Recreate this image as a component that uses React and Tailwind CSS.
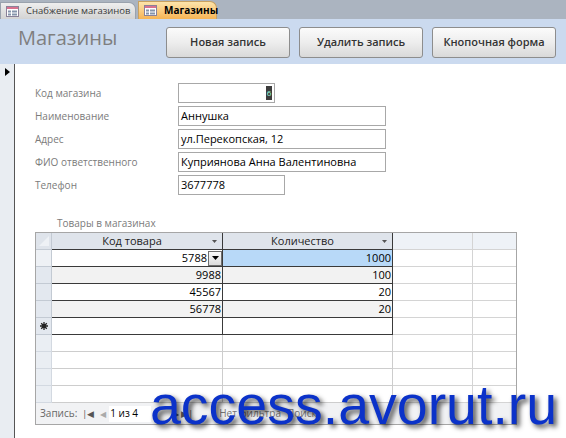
import React from 'react';

const FormIcon = () => (
  <svg width="13" height="11" viewBox="0 0 13 11" className="shrink-0">
    <rect x="0.5" y="0.5" width="12" height="10" fill="#fff" stroke="#8a8198" />
    <rect x="1" y="1" width="11" height="2" fill="#d9728f" />
    <rect x="2" y="4.5" width="3" height="2" fill="#8594ab" />
    <rect x="6" y="4.5" width="5" height="2" fill="#8594ab" />
    <rect x="2" y="7.5" width="3" height="2" fill="#8594ab" />
    <rect x="6" y="7.5" width="5" height="2" fill="#8594ab" />
  </svg>
);

const HeadArrow = () => (
  <svg width="5" height="3" viewBox="0 0 5 3">
    <path d="M0 0h5L2.5 3z" fill="#555" />
  </svg>
);

const Field = ({ label, width, value, cursor }) => (
  <div className="flex h-[20px] items-center">
    <div className="w-[143px] text-[10px] text-[#7b7b7b]">{label}</div>
    <div
      className="flex h-[20px] items-center border border-[#a8a8a8] bg-white px-[2px] text-[11px] text-black"
      style={{ width }}
    >
      <span className="flex-1 whitespace-nowrap">{value}</span>
      {cursor && (
        <span className="flex h-[14px] w-[6px] items-center justify-center bg-[#3d3d3d] text-[8px] leading-none text-[#9fd]">
          6
        </span>
      )}
    </div>
  </div>
);

const rows = [
  { code: '5788', qty: '1000', bg: 'bg-white', first: true },
  { code: '9988', qty: '100', bg: 'bg-[#f2f2f2]' },
  { code: '45567', qty: '20', bg: 'bg-white' },
  { code: '56778', qty: '20', bg: 'bg-[#f2f2f2]' },
];

const Star = () => (
  <svg width="8" height="8" viewBox="0 0 8 8">
    <path d="M4 0v8M0 4h8M1.2 1.2l5.6 5.6M6.8 1.2l-5.6 5.6" stroke="#222" strokeWidth="1.3" />
  </svg>
);

export default function App() {
  return (
    <div className="relative flex h-[438px] w-[566px] flex-col overflow-hidden bg-white font-['Open_Sans',Arial,sans-serif]">
      {/* tab bar */}
      <div className="flex h-[19px] items-end bg-[#abb4c0]">
        <div className="flex h-[17px] w-[136px] items-center gap-[7px] whitespace-nowrap rounded-tr-[7px] border border-b-0 border-[#9aa2ad] bg-gradient-to-b from-[#eeeeee] to-[#d3d3d3] pl-[5px] text-[9.5px] text-[#3a3a3a]">
          <FormIcon />
          <span>Снабжение магазинов</span>
        </div>
        <div className="ml-[2px] flex h-[18px] w-[79px] items-center gap-[7px] whitespace-nowrap rounded-tr-[7px] border border-b-0 border-[#c9a160] bg-gradient-to-b from-[#fde4aa] to-[#f6b453] pl-[5px] text-[10px] font-bold text-black">
          <FormIcon />
          <span>Магазины</span>
        </div>
      </div>

      {/* form header */}
      <div className="flex h-[45px] bg-[#cbdaef]">
        <div className="w-[166px] pl-[18px] pt-[4px] text-[20px] text-[#7f7f7f]">Магазины</div>
        <div className="mt-[8px] flex gap-[9px]">
          {['Новая запись', 'Удалить запись', 'Кнопочная форма'].map((t) => (
            <div
              key={t}
              className="flex h-[31px] w-[124px] items-center justify-center rounded-[3px] border border-[#8d8d8d] bg-gradient-to-b from-[#fbfbfb] via-[#ededed] to-[#d9d9d9] text-[11px] font-semibold text-[#333]"
            >
              {t}
            </div>
          ))}
        </div>
      </div>

      {/* body */}
      <div className="flex flex-1">
        <div className="w-[15px] border-r border-[#555] bg-[#e9edf2]">
          <div className="flex h-[16px] items-center pl-[5px]">
            <svg width="5" height="8" viewBox="0 0 5 8">
              <path d="M0 0l5 4-5 4z" fill="#000" />
            </svg>
          </div>
        </div>

        <div className="flex-1 pl-[20px]">
          <div className="mt-[19px] flex flex-col gap-[3px]">
            <Field label="Код магазина" width={97} value="" cursor />
            <Field label="Наименование" width={208} value="Аннушка" />
            <Field label="Адрес" width={208} value="ул.Перекопская, 12" />
            <Field label="ФИО ответственного" width={208} value="Куприянова Анна Валентиновна" />
            <Field label="Телефон" width={107} value="3677778" />
          </div>

          <div className="ml-[22px] mt-[21px] h-[14px] text-[10px] leading-[14px] text-[#7b7b7b]">
            Товары в магазинах
          </div>

          {/* datasheet */}
          <div className="mt-[2px] w-[482px] border border-[#a6a6a6] text-[11px]">
            {/* header */}
            <div className="flex h-[17px] bg-[#dfe4eb]">
              <div className="relative w-[16px] border-b border-r border-[#c3cad3]">
                <svg className="absolute left-[3px] top-[3px]" width="10" height="10" viewBox="0 0 10 10">
                  <path d="M10 0v10H0z" fill="#eef1f5" />
                </svg>
              </div>
              <div className="flex w-[171px] items-center border-b border-r border-[#3a3a3a] pr-[5px]">
                <span className="flex-1 text-center text-[#222]">Код товара</span>
                <HeadArrow />
              </div>
              <div className="flex w-[170px] items-center border-b border-r border-[#3a3a3a] pr-[5px]">
                <span className="flex-1 text-center text-[#222]">Количество</span>
                <HeadArrow />
              </div>
              <div className="w-[80px] border-b border-r border-[#d4d4d4] bg-[#eef2f7]" />
              <div className="w-[43px] border-b border-[#d4d4d4] bg-[#eef2f7]" />
            </div>

            {rows.map((r) => (
              <div key={r.code} className="flex h-[17px]">
                <div className={`w-[16px] border-b border-r border-[#c3cad3] ${r.first ? 'bg-[#eef1f5]' : 'bg-[#e3e8ef]'}`} />
                <div className={`flex w-[171px] items-center justify-end border-b border-r border-[#3a3a3a] ${r.bg}`}>
                  <span className="pr-[1px] text-black">{r.code}</span>
                  {r.first && (
                    <div className="flex h-[15px] w-[14px] items-center justify-center border border-[#6f6f6f] bg-gradient-to-b from-[#fafafa] to-[#dcdcdc]">
                      <svg width="7" height="4" viewBox="0 0 7 4">
                        <path d="M0 0h7L3.5 4z" fill="#000" />
                      </svg>
                    </div>
                  )}
                </div>
                <div
                  className={`flex w-[170px] items-center justify-end border-b border-r border-[#3a3a3a] pr-[1px] text-black ${
                    r.first ? 'bg-[#b8d9f8]' : r.bg
                  }`}
                >
                  {r.qty}
                </div>
                <div className="w-[80px] border-b border-r border-[#d4d4d4]" />
                <div className="w-[43px] border-b border-[#d4d4d4]" />
              </div>
            ))}

            {/* new record row */}
            <div className="flex h-[17px]">
              <div className="flex w-[16px] items-center justify-center border-b border-r border-[#c3cad3] bg-[#e3e8ef]">
                <Star />
              </div>
              <div className="w-[171px] border-b border-r border-[#3a3a3a]" />
              <div className="w-[170px] border-b border-r border-[#3a3a3a]" />
              <div className="w-[80px] border-b border-r border-[#d4d4d4]" />
              <div className="w-[43px] border-b border-[#d4d4d4]" />
            </div>

            {[0, 1, 2, 3].map((i) => (
              <div key={i} className="flex h-[17px]">
                <div className="w-[16px] border-b border-r border-[#d3d9e1] bg-[#eaeef3]" />
                <div className="w-[171px] border-b border-r border-[#cdcdcd]" />
                <div className="w-[170px] border-b border-r border-[#cdcdcd]" />
                <div className="w-[80px] border-b border-r border-[#d4d4d4]" />
                <div className="w-[43px] border-b border-[#d4d4d4]" />
              </div>
            ))}

            {/* navigation bar */}
            <div className="flex h-[21px] items-center whitespace-nowrap bg-[#f1f2f4] pl-[4px] text-[10px] text-[#666]">
              <span>Запись:</span>
              <span className="ml-[5px] text-[9px] text-[#555]">|◀</span>
              <span className="ml-[6px] text-[8px] text-[#aaa]">◀</span>
              <span className="ml-[3px] flex h-[16px] w-[42px] items-center bg-white pl-[1px] text-black">1 из 4</span>
              <span className="ml-[22px] text-[8px] text-[#555]">▶</span>
              <span className="ml-[2px] text-[9px] text-[#555]">▶|</span>
              <span className="ml-[26px] text-[#777]">Нет фильтра</span>
              <span className="ml-[6px] text-[#777]">Поиск</span>
            </div>
          </div>
        </div>
      </div>

      {/* watermark */}
      <div className="pointer-events-none absolute left-[150px] top-[378px] font-['Liberation_Sans',Arial,sans-serif] text-[55.5px] leading-none text-[#0b32c9] [text-shadow:3px_3px_5px_rgba(0,0,0,0.7)]">
        access.avorut.ru
      </div>
    </div>
  );
}
